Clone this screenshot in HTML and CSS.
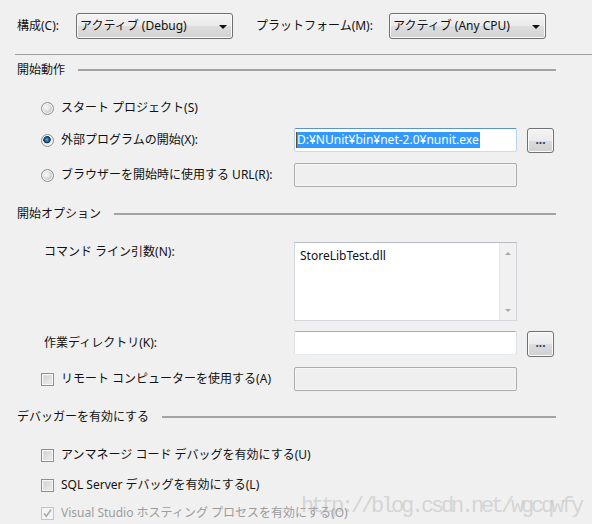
FILE: index.html
```html
<!DOCTYPE html>
<html lang="ja">
<head>
<meta charset="utf-8">
<title>デバッグ</title>
<link rel="stylesheet" href="styles.css">
</head>
<body>
<div class="page">
  <div class="toolbar">
    <span class="cfg">構成(C):</span>
    <div class="combo"><span class="combo-text">アクティブ (Debug)</span><i class="arrow"></i></div>
    <span class="plat">プラットフォーム(M):</span>
    <div class="combo"><span class="combo-text">アクティブ (Any CPU)</span><i class="arrow"></i></div>
  </div>
  <div class="separator"></div>

  <div class="group-head h1"><span>開始動作</span><i class="rule"></i></div>
  <div class="row r1"><div class="lead"><span class="radio"></span><span>スタート プロジェクト(S)</span></div></div>
  <div class="row r2">
    <div class="lead"><span class="radio checked"></span><span>外部プログラムの開始(X):</span></div>
    <div class="field focused"><span class="sel">D:¥NUnit¥bin¥net-2.0¥nunit.exe</span></div>
    <div class="browse">...</div>
  </div>
  <div class="row r3">
    <div class="lead"><span class="radio"></span><span>ブラウザーを開始時に使用する URL(R):</span></div>
    <div class="field disabled"></div>
  </div>

  <div class="group-head h2"><span>開始オプション</span><i class="rule"></i></div>
  <div class="row cmd">
    <div class="lead plain">コマンド ライン引数(N):</div>
    <div class="textarea">
      <div class="ta-text">StoreLibTest.dll</div>
      <div class="scroll"><i class="up"></i><i class="down"></i></div>
    </div>
  </div>
  <div class="row wd">
    <div class="lead plain">作業ディレクトリ(K):</div>
    <div class="field"></div>
    <div class="browse tall">...</div>
  </div>
  <div class="row rm">
    <div class="lead"><span class="check"></span><span>リモート コンピューターを使用する(A)</span></div>
    <div class="field disabled"></div>
  </div>

  <div class="group-head h3"><span>デバッガーを有効にする</span><i class="rule"></i></div>
  <div class="row c1"><div class="lead wide"><span class="check"></span><span>アンマネージ コード デバッグを有効にする(U)</span></div></div>
  <div class="row c2"><div class="lead wide"><span class="check"></span><span>SQL Server デバッグを有効にする(L)</span></div></div>
  <div class="row c3"><div class="lead wide dim"><span class="check off"><svg width="11" height="11" viewBox="0 0 11 11"><path d="M2 5.5 L4.3 8.3 L9 1.8" fill="none" stroke="#a9a9a9" stroke-width="1.6"/></svg></span><span>Visual Studio ホスティング プロセスを有効にする(O)</span></div></div>

  <div class="watermark">http://blog.csdn.net/wgcqwfy</div>
</div>
</body>
</html>
```

FILE: styles.css
```css
html, body {
  margin: 0;
  background: #f0f0f0;
}
body {
  font: 12px/20px "Noto Sans", "Noto Sans CJK JP", sans-serif;
  color: #111;
}
.page {
  position: relative;
  width: 592px;
  height: 524px;
  overflow: hidden;
}
.toolbar {
  display: flex;
  align-items: center;
  height: 26px;
  padding: 13px 0 0 17px;
}
.cfg { width: 59px; }
.plat { width: 133px; margin-left: 23px; }
.combo {
  width: 157px;
  height: 26px;
  box-sizing: border-box;
  border: 1px solid #707070;
  border-radius: 3px;
  background: linear-gradient(#f4f4f4, #eaeaea 50%, #dedede 50%, #d2d2d2);
  box-shadow: inset 0 0 0 1px #fafafa;
  display: flex;
  align-items: center;
  padding: 0 3px 0 3px;
}
.combo-text { flex: 1; white-space: nowrap; }
.arrow {
  width: 0;
  height: 0;
  border-left: 4px solid transparent;
  border-right: 4px solid transparent;
  border-top: 4px solid #111;
  margin: 1px 2px 0 0;
}
.separator {
  margin: 15px 0 0 15px;
  height: 1px;
  background: #a0a0a0;
}
.group-head {
  display: flex;
  align-items: center;
  height: 20px;
  padding: 0 36px 0 17px;
}
.rule {
  flex: 1;
  height: 2px;
  margin-left: 13px;
  background: #a3a3a3;
}
.h1 { margin-top: 5px; }
.h2 { margin-top: 17px; }
.h3 { margin-top: 16px; }

.row {
  display: flex;
  align-items: center;
  height: 24px;
  padding-left: 41px;
}
.r1 { margin-top: 16px; }
.r2 { margin-top: 8px; }
.r3 { margin-top: 11px; }
.cmd { margin-top: 18px; height: 79px; align-items: flex-start; }
.wd { margin-top: 10px; }
.rm { margin-top: 12px; }
.c1 { margin-top: 16px; }
.c2 { margin-top: 6px; }
.c3 { margin-top: 4px; }

.lead {
  width: 253px;
  display: flex;
  align-items: center;
  gap: 7px;
  white-space: nowrap;
}
.lead.wide { width: auto; }
.lead.plain { padding-left: 3px; width: 250px; }
.dim { color: #9c9c9c; }

.radio {
  width: 13px;
  height: 13px;
  box-sizing: border-box;
  border-radius: 50%;
  border: 1px solid #8e8f8f;
  background: radial-gradient(circle at 40% 40%, #fbfbfb 0, #e6e6e6 3px, #cfcfcf 5px);
  box-shadow: inset 0 0 0 1px #f6f6f6;
  flex: none;
}
.radio.checked {
  background: radial-gradient(circle at 45% 42%, #7cc4ef 0, #2a6fa5 1.5px, #0d2f52 3.5px, #e4e4e4 4px, #f4f4f4 5.5px);
}
.check {
  width: 13px;
  height: 13px;
  box-sizing: border-box;
  border: 1px solid #8f8f8f;
  background: linear-gradient(135deg, #c9cbcf, #f4f4f4);
  box-shadow: inset 0 0 0 1px #f7f7f7, inset 0 0 0 2px #e2e2e2;
  flex: none;
  display: flex;
  align-items: center;
  justify-content: center;
}
.check.off {
  border-color: #c4c4c4;
  background: #f4f4f4;
  box-shadow: none;
}

.field {
  width: 223px;
  height: 24px;
  box-sizing: border-box;
  border: 1px solid;
  border-color: #abadb3 #dbdfe6 #e3e9ef #e2e3ea;
  border-radius: 2px;
  background: #fff;
  display: flex;
  align-items: center;
  flex: none;
  overflow: hidden;
  white-space: nowrap;
}
.field.focused {
  border-color: #5c93c8 #b7d3ee #c5dcf2 #b7d3ee;
}
.field.disabled {
  background: #efefef;
  border-color: #adadad;
  box-shadow: inset 0 0 0 1px #f6f6f6;
}
.sel {
  margin-left: 1px;
  padding-right: 1px;
  line-height: 16px;
  background: #3399ff;
  color: #fff;
  border-left: 1px solid #6a4a20;
}

.browse {
  width: 27px;
  height: 25px;
  box-sizing: border-box;
  margin-left: 10px;
  align-self: flex-start;
  border: 1px solid #707070;
  border-radius: 3px;
  background: linear-gradient(#f4f4f4, #ebebeb 50%, #dddddd 50%, #d0d0d0);
  box-shadow: inset 0 0 0 1px #fbfbfb;
  color: #1c3f6e;
  font-weight: bold;
  text-align: center;
  line-height: 21px;
  font-size: 12px;
  flex: none;
}
.browse.tall { height: 26px; }

.textarea {
  width: 223px;
  height: 79px;
  box-sizing: border-box;
  border: 1px solid #d3d6db;
  border-top-color: #b9bcc2;
  background: #fff;
  display: flex;
  flex: none;
}
.ta-text {
  flex: 1;
  padding: 3px 0 0 5px;
  line-height: 20px;
}
.scroll {
  width: 16px;
  background: #f1f1f1;
  border-left: 1px solid #e8e8e8;
  display: flex;
  flex-direction: column;
  justify-content: space-between;
  align-items: center;
  padding: 9px 0 8px;
}
.up, .down {
  width: 0;
  height: 0;
  border-left: 3px solid transparent;
  border-right: 3px solid transparent;
}
.up { border-bottom: 3px solid #a9a9a9; }
.down { border-top: 3px solid #a9a9a9; }

.watermark {
  position: absolute;
  left: 301px;
  top: 496px;
  font: 22px/22px "Liberation Mono", monospace;
  letter-spacing: -3.2px;
  color: rgba(170, 170, 170, 0.4);
  white-space: nowrap;
}
```
